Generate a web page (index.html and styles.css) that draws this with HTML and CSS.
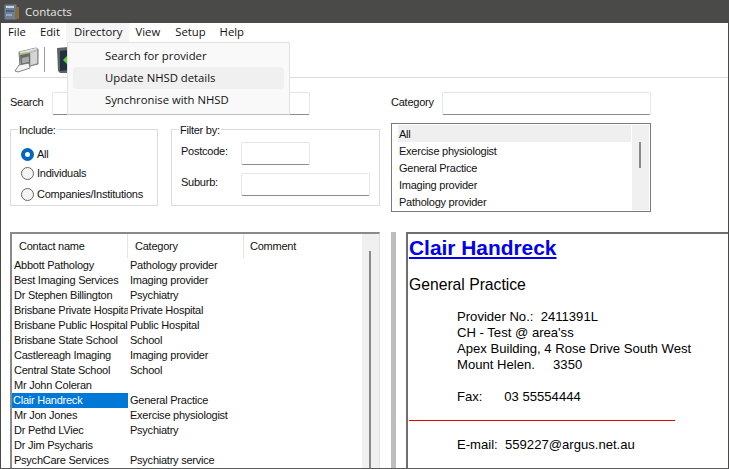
FILE: index.html
```html
<!DOCTYPE html>
<html lang="en">
<head>
<meta charset="utf-8">
<title>Contacts</title>
<link rel="stylesheet" href="styles.css">
</head>
<body>
<div class="window">
  <header class="titlebar">
    <svg class="app-icon" width="15" height="16" viewBox="0 0 15 16">
      <rect x="0.5" y="0.5" width="12" height="15" rx="1" fill="#6f7f95"/>
      <rect x="2" y="2" width="8" height="2" fill="#c9d3df"/>
      <rect x="2" y="6" width="8" height="2" fill="#3f5f92"/>
      <rect x="2" y="10" width="6" height="2" fill="#9aa8ba"/>
      <rect x="11" y="3" width="4" height="12" fill="#8b6b3e"/>
    </svg>
    <span>Contacts</span>
  </header>
  <nav class="menubar">
    <span class="menu-item">File</span>
    <span class="menu-item">Edit</span>
    <span class="menu-item menu-open">Directory</span>
    <span class="menu-item menu-view">View</span>
    <span class="menu-item">Setup</span>
    <span class="menu-item">Help</span>
  </nav>
  <div class="toolbar">
    <svg class="tool-printer" width="25" height="26" viewBox="0 0 25 26">
      <path d="M5 5 L22 1 L24 2 L24 17 L8 21 L6 20 Z" fill="#b9b9b9" stroke="#5c5c5c" stroke-width="0.8"/>
      <path d="M5 5 L22 1 L24 2 L8 7 Z" fill="#e2e2e2"/>
      <path d="M6 8 L16 6 L16 17 L7 19 Z" fill="#6a6a6a"/>
      <path d="M7 6 L13 5 L14 6 L8 7 Z" fill="#8fd14f"/>
      <path d="M8 11 L15 9.5 L15 15 L8 16.5 Z" fill="#a8a8a8"/>
      <path d="M17 6 L23 4 L23 16 L17 18 Z" fill="#d6d6d6"/>
      <path d="M1 24 L5 18 L15 16 L16 21 L4 25 Z" fill="#f4f4f4" stroke="#6a6a6a" stroke-width="0.8"/>
    </svg>
    <span class="tool-sep"></span>
    <svg class="tool-door" width="11" height="26" viewBox="0 0 11 26">
      <path d="M0 1 L11 0 L11 26 L3 26 L1 24 Z" fill="#5d6268"/>
      <path d="M3 4 L11 3 L11 23 L3 24 Z" fill="#22313f"/>
      <path d="M6 13 L11 8 L11 18 Z" fill="#63d13e"/>
    </svg>
  </div>

  <section class="filters">
    <div class="filters-left">
      <div class="field-row">
        <label class="search-label">Search</label>
        <span class="input search-input"></span>
      </div>
      <div class="groups">
        <div class="group include-group">
          <span class="legend">Include:</span>
          <div class="radio-row radio-all"><span class="radio checked"></span><span>All</span></div>
          <div class="radio-row radio-ind"><span class="radio"></span><span>Individuals</span></div>
          <div class="radio-row radio-com"><span class="radio"></span><span>Companies/Institutions</span></div>
        </div>
        <div class="group filter-group">
          <span class="legend">Filter by:</span>
          <div class="filter-row filter-post"><label>Postcode:</label><span class="input postcode-input"></span></div>
          <div class="filter-row filter-sub"><label>Suburb:</label><span class="input suburb-input"></span></div>
        </div>
      </div>
    </div>
    <div class="filters-right">
      <div class="field-row">
        <label class="category-label">Category</label>
        <span class="input category-input"></span>
      </div>
      <div class="category-list">
        <ul class="category-items">
          <li class="active">All</li>
          <li>Exercise physiologist</li>
          <li>General Practice</li>
          <li>Imaging provider</li>
          <li>Pathology provider</li>
        </ul>
        <div class="cat-scroll"><span class="cat-thumb"></span></div>
      </div>
    </div>
  </section>

  <section class="lower">
    <div class="contact-list">
      <div class="contact-main">
        <div class="list-head">
          <span class="head-name">Contact name</span>
          <span class="head-cat">Category</span>
          <span class="head-com">Comment</span>
        </div>
        <div class="row"><span>Abbott Pathology</span><span>Pathology provider</span></div>
        <div class="row"><span>Best Imaging Services</span><span>Imaging provider</span></div>
        <div class="row"><span>Dr Stephen Billington</span><span>Psychiatry</span></div>
        <div class="row"><span>Brisbane Private Hospital</span><span>Private Hospital</span></div>
        <div class="row"><span>Brisbane Public Hospital</span><span>Public Hospital</span></div>
        <div class="row"><span>Brisbane State School</span><span>School</span></div>
        <div class="row"><span>Castlereagh Imaging</span><span>Imaging provider</span></div>
        <div class="row"><span>Central State School</span><span>School</span></div>
        <div class="row"><span>Mr John Coleran</span><span></span></div>
        <div class="row selected"><span>Clair Handreck</span><span>General Practice</span></div>
        <div class="row"><span>Mr Jon Jones</span><span>Exercise physiologist</span></div>
        <div class="row"><span>Dr Pethd LViec</span><span>Psychiatry</span></div>
        <div class="row"><span>Dr Jim Psycharis</span><span></span></div>
        <div class="row"><span>PsychCare Services</span><span>Psychiatry service</span></div>
      </div>
      <div class="list-scroll"><span class="list-thumb"></span></div>
    </div>
    <div class="splitter"></div>
    <article class="preview">
      <h1><a href="#">Clair Handreck</a></h1>
      <p class="practice">General Practice</p>
      <div class="details">
        <p class="line-provider">Provider No.:&nbsp; 2411391L</p>
        <p>CH - Test @ area'ss</p>
        <p>Apex Building, 4 Rose Drive South West</p>
        <p>Mount Helen.&nbsp;&nbsp;&nbsp;&nbsp; 3350</p>
        <p class="line-fax">Fax:&nbsp;&nbsp;&nbsp;&nbsp;&nbsp; 03 55554444</p>
      </div>
      <hr class="red-rule">
      <p class="line-email">E-mail:&nbsp; 559227@argus.net.au</p>
    </article>
  </section>

  <div class="popup">
    <div class="popup-item">Search for provider</div>
    <div class="popup-item hover">Update NHSD details</div>
    <div class="popup-item">Synchronise with NHSD</div>
  </div>
</div>
</body>
</html>
```

FILE: styles.css
```css
* { box-sizing: border-box; }
html, body { margin: 0; padding: 0; background: #fff; }
body { width: 729px; height: 469px; overflow: hidden; font-family: "Liberation Sans", Arial, sans-serif; font-size: 11px; letter-spacing: -0.24px; color: #111; }

.window { position: relative; width: 729px; height: 469px; display: flex; flex-direction: column; border-left: 1px solid #4a4a48; border-right: 1px solid #4a4a48; border-bottom: 1px solid #5a5a5a; background: #fff; }

.titlebar { flex: none; height: 23px; margin: 0 -1px; background: #4a4a48; color: #e6e6e6; display: flex; align-items: center; padding-left: 4px; font-family: "Open Sans", sans-serif; font-size: 11.5px; letter-spacing: 0; }
.app-icon { margin-right: 6px; }

.menubar { flex: none; height: 19px; display: flex; align-items: center; font-family: "Open Sans", sans-serif; font-size: 11.3px; letter-spacing: 0; color: #111; }
.menu-item { height: 19px; line-height: 18px; padding: 0 7px; }
.menu-open { margin-left: -1px; padding: 0 6px 0 8px; background: #f5f5f5; }
.menu-view { padding-right: 8px; }

.toolbar { flex: none; height: 36px; display: flex; align-items: center; border-bottom: 1px solid #dcdcdc; padding-left: 13px; }
.tool-sep { width: 1px; height: 25px; background: #9a9a9a; margin: 0 12px 0 5px; }

.filters { flex: none; height: 154px; display: flex; padding-left: 9px; }
.filters-left { width: 370px; padding-top: 14px; }
.filters-right { width: 260px; margin-left: 11px; padding-top: 14px; }

.field-row { display: flex; align-items: center; height: 23px; }
.search-label { width: 42px; margin-bottom: 3px; }
.category-label { width: 51px; margin-bottom: 3px; }
.input { display: block; height: 23px; background: #fff; border: 1px solid #e6e6e6; border-bottom: 1px solid #8a8a8a; border-radius: 2px; }
.search-input { width: 258px; }
.category-input { width: 209px; }

.groups { display: flex; gap: 13px; margin-top: 14px; }
.group { position: relative; height: 77px; border: 1px solid #dcdcdc; }
.include-group { width: 148px; }
.filter-group { width: 209px; }
.legend { position: absolute; top: -7px; left: 7px; line-height: 14px; padding: 0 1px; background: #fff; }

.radio-row { position: absolute; left: 10px; display: flex; align-items: center; gap: 3px; height: 14px; }
.radio-all { top: 17px; }
.radio-ind { top: 36px; }
.radio-com { top: 57px; }
.radio { width: 13px; height: 13px; border-radius: 50%; border: 1px solid #666; background: #f4f4f4; }
.radio.checked { border: 4px solid #0067c0; background: #fff; }

.filter-row { position: absolute; left: 9px; display: flex; align-items: center; }
.filter-row label { width: 60px; margin-bottom: 5px; }
.filter-post { top: 12px; }
.filter-sub { top: 43px; }
.postcode-input { width: 69px; }
.suburb-input { width: 129px; }

.category-list { display: flex; width: 260px; height: 89px; margin-top: 8px; border: 1px solid #7a7a7a; padding: 1px; }
.category-items { flex: 1; margin: 0; padding: 0 0 0 5px; list-style: none; }
.category-items li { height: 17px; line-height: 19px; padding-left: 1px; }
.category-items li.active { background: #efefef; }
.cat-scroll { width: 17px; background: #f0f0f0; margin-left: 1px; padding: 17px 0 0 7px; }
.cat-thumb { display: block; width: 2px; height: 26px; background: #8a8a8a; }

.lower { flex: 1; min-height: 0; display: flex; padding-left: 9px; }
.contact-list { width: 370px; display: flex; border-top: 2px solid #8a8a8a; border-left: 2px solid #8a8a8a; border-right: 1px solid #e0e0e0; overflow: hidden; }
.contact-main { flex: 1; min-width: 0; }
.list-head { display: grid; grid-template-columns: 116px 116px 1fr; height: 24px; line-height: 24px; }
.list-head span { padding-left: 7px; border-right: 1px solid #e5e5e5; }
.list-head .head-com { padding-left: 6px; border-right: 0; }
.row { display: grid; grid-template-columns: 116px 116px; height: 15px; line-height: 15px; white-space: nowrap; }
.row span { overflow: hidden; padding-left: 2px; }
.row.selected span:first-child { background: #0078d7; color: #fff; padding-left: 1px; }
.list-scroll { flex: none; width: 17px; background: #f0f0f0; padding: 17px 0 0 7px; }
.list-thumb { display: block; width: 2px; height: 100%; background: #8a8a8a; }

.splitter { flex: none; width: 5px; margin-left: 11px; background: #bdbdbd; }

.preview { flex: 1; min-width: 0; margin-left: 10px; border-top: 2px solid #6e6e6e; border-left: 2px solid #6e6e6e; padding-left: 1px; font-size: 13.1px; letter-spacing: 0; color: #000; overflow: hidden; }
.preview p { margin: 0; }
.preview h1 { margin: 0; padding-top: 1px; font-size: 20.9px; line-height: 25px; font-weight: bold; }
.preview h1 a { color: #0000ee; }
.practice { margin-top: 15px !important; font-size: 15.7px; line-height: 20px; }
.details { margin-top: 14px; padding-left: 48px; }
.details p { line-height: 16px; }
.line-fax { margin-top: 16px !important; }
.red-rule { width: 266px; height: 1px; margin: 15px 0 0; border: 0; background: #e00000; }
.line-email { margin-top: 16px !important; padding-left: 48px; line-height: 16px; }

.popup { position: absolute; left: 66px; top: 42px; width: 223px; height: 73px; padding: 2px 5px; background: #f9f9f9; border: 1px solid #e2e2e2; border-bottom-color: #bdbdbd; font-family: "Open Sans", sans-serif; font-size: 11.3px; letter-spacing: 0; color: #111; }
.popup-item { height: 22px; line-height: 21px; padding-left: 32px; border-radius: 4px; }
.popup-item.hover { background: #f0f0f0; }
```
